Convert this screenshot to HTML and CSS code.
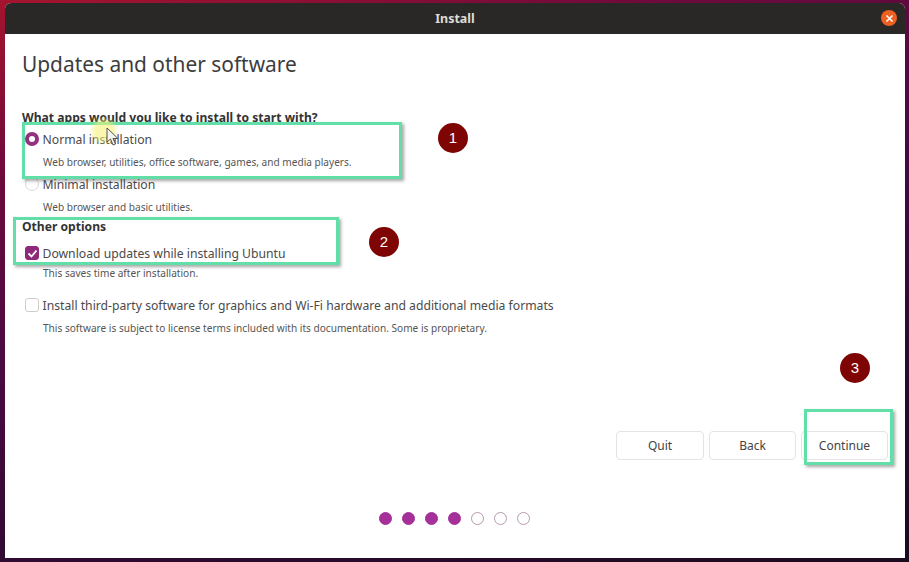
FILE: index.html
```html
<!DOCTYPE html>
<html lang="en">
<head>
<meta charset="utf-8">
<title>Install</title>
<link rel="stylesheet" href="styles.css">
</head>
<body>
<main class="window">
  <header class="titlebar">
    <span class="title">Install</span>
    <span class="close"><svg width="9" height="9" viewBox="0 0 9 9"><path d="M1.5 1.5l6 6M7.5 1.5l-6 6" stroke="#fff" stroke-width="1.6" fill="none"/></svg></span>
  </header>
  <section class="content">
    <h1 class="heading">Updates and other software</h1>
    <h2 class="question">What apps would you like to install to start with?</h2>
    <div class="row row-normal"><span class="radio radio-on"></span><span class="label">Normal installation</span></div>
    <p class="desc desc-normal">Web browser, utilities, office software, games, and media players.</p>
    <div class="row row-minimal"><span class="radio"></span><span class="label">Minimal installation</span></div>
    <p class="desc desc-minimal">Web browser and basic utilities.</p>
    <h2 class="question other">Other options</h2>
    <div class="row row-download"><span class="check check-on"><svg width="11" height="9" viewBox="0 0 11 9"><path d="M1.5 4.5l3 3 5-6" stroke="#fff" stroke-width="1.8" fill="none"/></svg></span><span class="label">Download updates while installing Ubuntu</span></div>
    <p class="desc desc-download">This saves time after installation.</p>
    <div class="row row-third"><span class="check"></span><span class="label">Install third-party software for graphics and Wi-Fi hardware and additional media formats</span></div>
    <p class="desc desc-third">This software is subject to license terms included with its documentation. Some is proprietary.</p>
    <div class="spacer"></div>
    <div class="buttons">
      <button class="btn">Quit</button>
      <button class="btn">Back</button>
      <button class="btn">Continue</button>
    </div>
    <div class="dots">
      <span class="dot dot-on"></span><span class="dot dot-on"></span><span class="dot dot-on"></span><span class="dot dot-on"></span><span class="dot"></span><span class="dot"></span><span class="dot"></span>
    </div>
  </section>
</main>
<div class="mark mark-1"></div>
<div class="mark mark-2"></div>
<div class="mark mark-3"></div>
<div class="badge badge-1">1</div>
<div class="badge badge-2">2</div>
<div class="badge badge-3">3</div>
<div class="halo"></div>
<svg class="cursor" width="15" height="20" viewBox="0 0 15 20"><path d="M1 1v14l3.500-3 2.500 6 2.500-1-2.500-5.500h5z" fill="#f4f4ee" stroke="#555" stroke-width="1"/></svg>
</body>
</html>
```
FILE: styles.css
```css
* { box-sizing: border-box; }
html, body { height: 100%; }
body {
  margin: 0;
  width: 909px;
  height: 562px;
  overflow: hidden;
  padding: 3px 4px 4px 5px;
  background: linear-gradient(165deg, #a5142e 0%, #6e0a3c 22%, #4a0a42 45%, #2c0a2e 75%, #1c0a1e 100%);
  font-family: "Noto Sans", "Open Sans", sans-serif;
  color: #3d3d3d;
  position: relative;
}
.window {
  height: 555px;
  display: flex;
  flex-direction: column;
  background: #fff;
  border-radius: 6px 6px 0 0;
  overflow: hidden;
}
.titlebar {
  height: 31px;
  flex: none;
  background: #2a2826;
  display: flex;
  align-items: center;
  justify-content: center;
  position: relative;
}
.title { color: #dedbd6; font: bold 12.500px "Noto Sans", sans-serif; }
.close {
  position: absolute;
  right: 8px;
  top: 7px;
  width: 16px;
  height: 16px;
  border-radius: 50%;
  background: #ee5f22;
  display: flex;
  align-items: center;
  justify-content: center;
}
.content {
  flex: 1;
  display: flex;
  flex-direction: column;
  padding: 0 17px;
}
.heading {
  margin: 15px 0 0;
  height: 30px;
  line-height: 30px;
  font-size: 20.900px;
  font-weight: 400;
  color: #3d3d3d;
}
.question {
  margin: 30px 0 0;
  height: 18px;
  line-height: 18px;
  font-size: 12.120px;
  font-weight: 700;
  color: #333;
}
.question.other { margin-top: 3px; }
.row { display: flex; align-items: center; height: 20px; font-size: 12.200px; padding-left: 3px; }
.label { margin-left: 3.500px; color: #4a4a4a; white-space: nowrap; }
.row-normal { margin-top: 2px; }
.row-minimal { margin-top: 4px; }
.row-download { margin-top: 7px; }
.row-third { margin-top: 14px; }
.desc {
  margin: 0;
  height: 16px;
  line-height: 16px;
  font-size: 10.100px;
  padding-left: 21px;
  color: #555;
}
.desc-normal { margin-top: 5px; }
.desc-minimal { margin-top: 5px; }
.desc-download { margin-top: 2px; }
.desc-third { margin-top: 5px; }
.radio {
  width: 14px; height: 14px; border-radius: 50%;
  border: 1px solid #dcdad6; background: #fff; flex: none;
}
.radio-on { border: 4.500px solid #93307f; background: #fff; }
.check {
  width: 14px; height: 14px; border-radius: 3px;
  border: 1px solid #cfcdc9; background: #fff; flex: none;
  display: flex; align-items: center; justify-content: center;
}
.check-on { background: #8d2a79; border-color: #8d2a79; }
.spacer { flex: 1; }
.buttons { display: flex; justify-content: flex-end; gap: 5px; }
.btn {
  width: 87px;
  height: 29px;
  border: 1px solid #e6e4e1;
  border-radius: 4px;
  background: #fff;
  font: 12px "Noto Sans", sans-serif;
  color: #444;
  padding: 0;
}
.btn:first-child { width: 88px; }
.dots { display: flex; justify-content: center; gap: 10px; margin: 52px 0 33px; padding-right: 2px; }
.dot { width: 13px; height: 13px; border-radius: 50%; border: 1px solid #b59aaf; background: #fff; }
.dot-on { background: #a5309a; border-color: #a5309a; }
.mark {
  position: absolute;
  border: 3px solid #62dfa8;
  box-shadow: 2px 2px 3px rgba(60, 60, 60, .45);
}
.mark-1 { left: 22px; top: 122px; width: 380px; height: 57px; }
.mark-2 { left: 13px; top: 217px; width: 326px; height: 48px; }
.mark-3 { left: 804px; top: 409px; width: 89px; height: 56px; }
.badge {
  position: absolute;
  width: 30px; height: 30px;
  border-radius: 50%;
  background: #7f0505;
  color: #fff;
  font: 15px/30px "Liberation Sans", sans-serif;
  text-align: center;
}
.badge-1 { left: 438px; top: 123px; }
.badge-2 { left: 369px; top: 227px; }
.badge-3 { left: 840px; top: 353px; }
.halo {
  position: absolute;
  left: 92px; top: 119px;
  width: 24px; height: 24px;
  border-radius: 50%;
  background: rgba(246, 240, 120, .6);
  filter: blur(2px);
}
.cursor { position: absolute; left: 106px; top: 127px; }
```
